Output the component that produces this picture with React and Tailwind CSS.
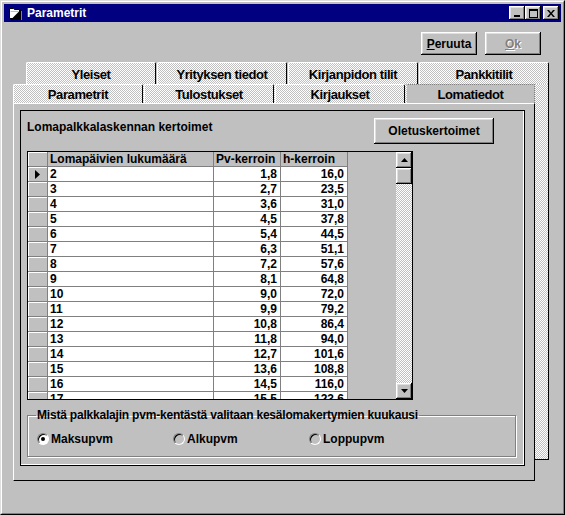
import React from 'react';

const rows = [
  ['2', '1,8', '16,0'],
  ['3', '2,7', '23,5'],
  ['4', '3,6', '31,0'],
  ['5', '4,5', '37,8'],
  ['6', '5,4', '44,5'],
  ['7', '6,3', '51,1'],
  ['8', '7,2', '57,6'],
  ['9', '8,1', '64,8'],
  ['10', '9,0', '72,0'],
  ['11', '9,9', '79,2'],
  ['12', '10,8', '86,4'],
  ['13', '11,8', '94,0'],
  ['14', '12,7', '101,6'],
  ['15', '13,6', '108,8'],
  ['16', '14,5', '116,0'],
  ['17', '15,5', '123,6'],
];

// Win95 raised bevel
const bevel = 'shadow-[inset_-1px_-1px_#000,inset_1px_1px_#fff,inset_-2px_-2px_#808080,inset_2px_2px_#dfdfdf]';
const dither = 'bg-[image:repeating-conic-gradient(#c0c0c0_0%_25%,#ffffff_0%_50%)] bg-[length:2px_2px]';

function Radio({ label, checked }) {
  return (
    <div className="flex items-center w-[136px]">
      <div
        className={`w-[12px] h-[12px] rounded-full flex items-center justify-center border border-t-[#808080] border-l-[#808080] border-r-white border-b-white shadow-[inset_1px_1px_#000] ${checked ? 'bg-white' : 'bg-[#c0c0c0]'}`}
      >
        {checked && <div className="w-[4px] h-[4px] rounded-full bg-black" />}
      </div>
      <span className="ml-[2px]">{label}</span>
    </div>
  );
}

function ScrollBtn({ down }) {
  return (
    <div className={`h-[16px] w-[16px] bg-[#c0c0c0] flex items-center justify-center ${bevel}`}>
      <svg width="7" height="4" viewBox="0 0 7 4">
        {down ? <path d="M0 0h7L3.5 4z" fill="#000" /> : <path d="M0 4h7L3.5 0z" fill="#000" />}
      </svg>
    </div>
  );
}

export default function App() {
  return (
    <div className="w-[565px] h-[515px] bg-[#c0c0c0] font-['Liberation_Sans',Arial,sans-serif] font-bold text-[12px] leading-[14px] text-black border border-t-[#dfdfdf] border-l-[#dfdfdf] border-r-black border-b-black">
      <div className="h-full border border-t-white border-l-white border-r-[#808080] border-b-[#808080] p-[2px] flex flex-col">
        {/* Title bar */}
        <div className="h-[18px] bg-[#000080] flex items-center pl-[4px] pr-[2px]">
          <svg width="15" height="13" viewBox="0 0 15 13">
            <path d="M1.5 1.5h4l1 1h5v9h-10z" fill="#fff" stroke="#000" />
            <path d="M2.5 4.5h8" stroke="#c0c0c0" />
            <path d="M12.5 3v9.5H3" stroke="#000" />
            <path d="M13.5 4v9.5" stroke="#808080" />
          </svg>
          <span className="text-white ml-[4px] text-[12px]">Parametrit</span>
          <div className="ml-auto flex items-center">
            <div className={`w-[16px] h-[14px] bg-[#c0c0c0] flex items-end justify-center pb-[3px] ${bevel}`}>
              <div className="w-[6px] h-[2px] bg-black mr-[1px]" />
            </div>
            <div className={`w-[16px] h-[14px] bg-[#c0c0c0] flex items-center justify-center ${bevel}`}>
              <div className="w-[9px] h-[9px] border border-black border-t-2" />
            </div>
            <div className={`w-[16px] h-[14px] bg-[#c0c0c0] flex items-center justify-center ml-[2px] ${bevel}`}>
              <svg width="8" height="7" viewBox="0 0 8 7">
                <path d="M0 0h2l2 2.5L6 0h2L5 3.5 8 7H6L4 4.5 2 7H0l3-3.5z" fill="#000" />
              </svg>
            </div>
          </div>
        </div>

        {/* Buttons */}
        <div className="mt-[10px] flex justify-end gap-[8px] pr-[20px]">
          <button className={`w-[56px] h-[23px] bg-[#c0c0c0] ${bevel}`}>
            <span className="underline">P</span>eruuta
          </button>
          <button className={`w-[56px] h-[23px] bg-[#c0c0c0] text-[#808080] [text-shadow:1px_1px_0_#fff] ${bevel}`}>
            <span className="underline">O</span>k
          </button>
        </div>

        {/* Tab control */}
        <div className="grid ml-[9px] mt-[7px]">
          {/* back row */}
          <div className="col-start-1 row-start-1 ml-[13px] flex flex-col">
            <div className="flex h-[22px] gap-[1px] text-[13px] tracking-[-0.4px]">
              {['Yleiset', 'Yrityksen tiedot', 'Kirjanpidon tilit', 'Pankkitilit'].map((t) => (
                <div
                  key={t}
                  className={`w-[130px] h-full flex items-center justify-center pt-[3px] rounded-t-[2px] border-t border-l border-white border-r border-r-black ${dither}`}
                >
                  {t}
                </div>
              ))}
            </div>
            <div className={`w-[523px] h-[376px] border-r border-b border-black ${dither}`} />
          </div>

          {/* front row */}
          <div className="col-start-1 row-start-1 mt-[22px] flex flex-col">
            <div className="flex h-[19px] gap-[1px] text-[13px] tracking-[-0.4px]">
              {['Parametrit', 'Tulostukset', 'Kirjaukset'].map((t) => (
                <div
                  key={t}
                  className={`w-[130px] h-full flex items-center justify-center pt-[2px] rounded-t-[2px] border-t border-l border-white border-r border-r-black ${dither}`}
                >
                  {t}
                </div>
              ))}
              <div className="w-[129px] h-full flex items-center justify-center pt-[2px] bg-[#c0c0c0] border-l border-white border-t border-r border-t-[#808080] border-r-[#808080] border-dotted">
                Lomatiedot
              </div>
            </div>

            {/* page */}
            <div className="w-[522px] h-[378px] bg-[#c0c0c0] border-t border-l border-white border-r border-b border-r-black border-b-black pt-[6px] pl-[6px]">
              <div className="w-[505px] h-[356px] border border-black shadow-[inset_-1px_-1px_#fff] flex flex-col pl-[6px]">
                <div className="flex items-start pt-[7px] pr-[30px]">
                  <span className="mt-[2px]">Lomapalkkalaskennan kertoimet</span>
                  <button className={`ml-auto w-[120px] h-[26px] bg-[#c0c0c0] ${bevel}`}>Oletuskertoimet</button>
                </div>

                {/* data grid */}
                <div className="mt-[7px] w-[386px] h-[249px] border border-black flex">
                  <div className="flex-1 bg-[#c0c0c0] overflow-hidden">
                    <div className="flex h-[15px]">
                      <div className="w-[20px] border-r border-b border-[#808080] shadow-[inset_1px_1px_#fff]" />
                      <div className="w-[166px] border-r border-b border-[#808080] pl-[2px]">Lomapäivien lukumäärä</div>
                      <div className="w-[67px] border-r border-b border-[#808080] pl-[2px]">Pv-kerroin</div>
                      <div className="w-[67px] border-r border-b border-[#808080] pl-[2px]">h-kerroin</div>
                    </div>
                    {rows.map((r, i) => (
                      <div key={r[0]} className="flex h-[15px]">
                        <div className="w-[20px] border-r border-b border-[#808080] shadow-[inset_1px_1px_#fff] flex items-center justify-center">
                          {i === 0 && (
                            <svg width="5" height="9" viewBox="0 0 5 9">
                              <path d="M0 0l5 4.5L0 9z" fill="#000" />
                            </svg>
                          )}
                        </div>
                        <div className="w-[166px] bg-white border-r border-b border-[#808080] pl-[2px]">{r[0]}</div>
                        <div className="w-[67px] bg-white border-r border-b border-[#808080] pr-[3px] text-right">{r[1]}</div>
                        <div className="w-[67px] bg-white border-r border-b border-[#808080] pr-[3px] text-right">{r[2]}</div>
                      </div>
                    ))}
                  </div>
                  <div className="w-[16px] flex flex-col">
                    <ScrollBtn />
                    <div className={`h-[16px] w-[16px] bg-[#c0c0c0] ${bevel}`} />
                    <div className={`flex-1 ${dither}`} />
                    <ScrollBtn down />
                  </div>
                </div>

                {/* group box */}
                <fieldset className="mt-[8px] w-[489px] h-[49px] border border-[#808080] shadow-[inset_1px_1px_#fff,1px_1px_#fff] px-[9px]">
                  <legend className="px-[1px] -ml-[1px] tracking-[-0.2px]">Mistä palkkalajin pvm-kentästä valitaan kesälomakertymien kuukausi</legend>
                  <div className="flex items-center mt-[10px]">
                    <Radio label="Maksupvm" checked />
                    <Radio label="Alkupvm" />
                    <Radio label="Loppupvm" />
                  </div>
                </fieldset>
              </div>
            </div>
          </div>
        </div>
      </div>
    </div>
  );
}
